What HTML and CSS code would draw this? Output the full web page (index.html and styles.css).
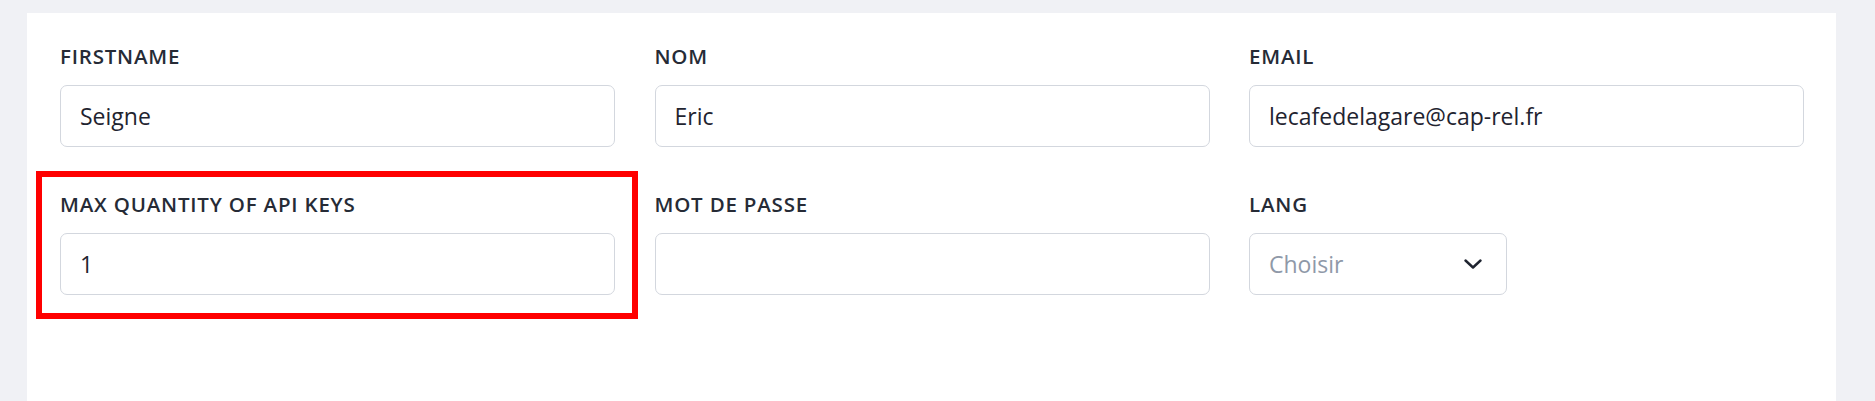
FILE: index.html
```html
<!DOCTYPE html>
<html lang="fr">
<head>
<meta charset="utf-8">
<title>Profil</title>
<link rel="stylesheet" href="styles.css">
</head>
<body>
<main class="card">
  <form class="form-grid">
    <div class="field">
      <label class="label" for="firstname">FIRSTNAME</label>
      <input class="input" id="firstname" type="text" value="Seigne">
    </div>
    <div class="field">
      <label class="label" for="nom">NOM</label>
      <input class="input" id="nom" type="text" value="Eric">
    </div>
    <div class="field">
      <label class="label" for="email">EMAIL</label>
      <input class="input" id="email" type="text" value="lecafedelagare@cap-rel.fr">
    </div>
    <div class="field field--highlight">
      <label class="label" for="maxkeys">MAX QUANTITY OF API KEYS</label>
      <input class="input" id="maxkeys" type="text" value="1">
      <span class="highlight-box" aria-hidden="true"></span>
    </div>
    <div class="field">
      <label class="label" for="pwd">MOT DE PASSE</label>
      <input class="input" id="pwd" type="password" value="">
    </div>
    <div class="field">
      <label class="label" for="lang">LANG</label>
      <div class="select">
        <span class="select__placeholder">Choisir</span>
        <svg class="select__chevron" width="18" height="10" viewBox="0 0 18 10" aria-hidden="true">
          <path d="M1.5 1.5 L9 8.5 L16.5 1.5" fill="none" stroke="#1f2430" stroke-width="2.4" stroke-linecap="round" stroke-linejoin="round"/>
        </svg>
      </div>
    </div>
  </form>
</main>
</body>
</html>
```

FILE: styles.css
```css
* { box-sizing: border-box; }

html, body {
  margin: 0;
  height: 100%;
}

body {
  background: #f0f1f5;
  font-family: "Open Sans", "Noto Sans", sans-serif;
  padding: 13px 39px 0 27px;
}

.card {
  background: #ffffff;
  height: 100%;
  padding: 28px 32px 0 33px;
}

.form-grid {
  display: grid;
  grid-template-columns: repeat(3, 555px);
  column-gap: 39.5px;
  row-gap: 42px;
}

.field {
  display: flex;
  flex-direction: column;
  gap: 14px;
  position: relative;
}

.label {
  font-size: 20.5px;
  font-weight: 600;
  color: #262b36;
  letter-spacing: 0.8px;
  line-height: 30px;
}

.input {
  height: 62px;
  width: 100%;
  border: 1px solid #d3d7de;
  border-radius: 7px;
  padding: 0 19px;
  font-family: inherit;
  font-size: 23px;
  color: #1f2430;
  background: #fff;
  outline: none;
}

.select {
  width: 258px;
  height: 62px;
  border: 1px solid #d3d7de;
  border-radius: 7px;
  padding: 0 24px 0 19px;
  display: flex;
  align-items: center;
  justify-content: space-between;
}

.select__placeholder {
  font-size: 23px;
  color: #8f99a8;
}

.highlight-box {
  position: absolute;
  left: -24px;
  right: -23px;
  top: -18px;
  bottom: -24px;
  border: 6px solid #ff0000;
  pointer-events: none;
}
```
